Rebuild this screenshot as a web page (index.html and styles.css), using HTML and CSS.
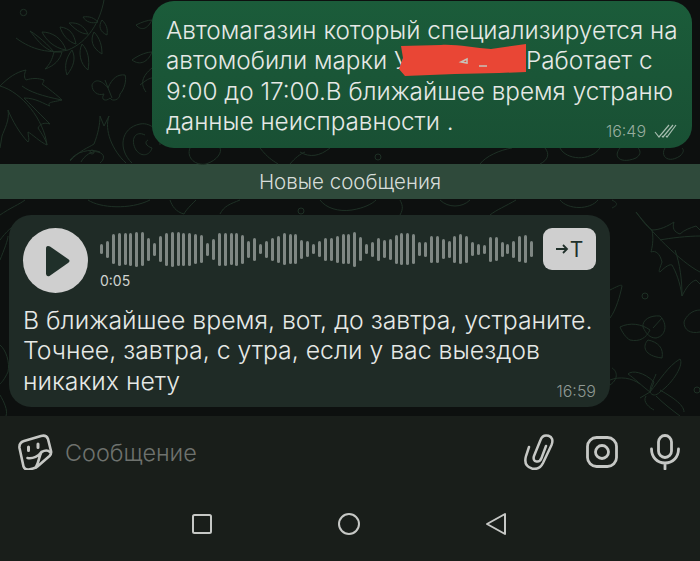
FILE: index.html
```html
<!DOCTYPE html>
<html>
<head>
	<meta charset="utf-8">
	<title>Чат</title>
	<link rel="stylesheet" href="styles.css">
</head>
<body>
	<div class="chat">
		<svg class="doodles" width="700" height="416" viewBox="0 0 700 416" fill="none">
			<!-- branch -->
			<path d="M104 0C100 22 88 42 68 50C50 54 32 50 16 38"/>
			<path d="M54 52C44 40 32 32 30 31C36 38 42 48 54 52ZM66 50C62 38 52 32 42 32C46 40 54 48 66 50ZM76 44C74 34 70 28 60 27C62 34 68 42 76 44ZM88 34C84 26 78 22 69 23C74 28 80 34 88 34ZM98 22C94 18 90 16 83 17C86 22 92 24 98 22Z"/>
			<path d="M54 52C52 60 50 64 45 69C54 66 60 60 62 52ZM72 50C66 58 64 66 67 75C74 66 76 58 72 50ZM82 44C78 52 80 64 88 70C90 60 88 50 82 44ZM94 32C90 40 92 48 102 54C102 46 100 38 94 32ZM102 20C98 26 100 32 107 35C108 28 106 24 102 20Z"/>
			<circle cx="23.500" cy="12.500" r="3.200"/>
			<!-- maple leaf -->
			<path d="M0 86C8 78 16 72 26 70C24 74 24 78 26 80C32 78 38 78 44 80C44 82 42 84 42 84C48 88 58 96 62 100C54 102 46 102 50 106C44 104 36 98 24 98C30 104 36 110 50 124C44 122 40 124 38 128C42 134 46 140 47 145C40 142 32 134 28 132C28 136 30 140 28 142C20 134 12 120 8 110C10 120 4 130 2 136L0 148"/>
			<path d="M0 86C22 92 44 120 47 145M22 86C30 92 42 96 62 100"/>
			<!-- butterfly -->
			<path d="M108 88C100 78 94 80 92 85C92 92 98 96 104 94C100 100 106 102 110 98C112 102 120 100 120 94C124 90 127 80 125 75C118 74 112 78 108 88ZM108 88L105 80M108 88L112 98"/>
			<!-- squirrel -->
			<path d="M70 161C80 150 88 148 94 144C98 134 100 124 100 116L104 126L109 116C104 130 112 150 126 163M81 162C84 156 92 150 98 152C106 154 104 160 100 163"/>
			<circle cx="92" cy="152" r="2"/>
			<path d="M132 163C118 150 120 128 140 124C152 122 160 132 160 145M145 135C135 130 130 140 136 150C142 158 150 155 152 148C146 146 144 142 148 140"/>
			<!-- leaves behind bubble -->
			<path d="M136 25C142 22 148 20 152 20C148 28 142 32 136 25ZM132 60C140 54 148 52 152 52C148 62 140 66 132 60ZM140 85C146 80 150 78 152 78M146 92C140 84 142 76 152 68"/>
			<!-- strip under the outgoing bubble -->
			<path d="M70 160C76 152 90 148 100 152M190 148C186 158 196 166 206 164C218 160 222 152 220 148M260 148C268 158 272 160 278 164M300 152C310 158 320 156 330 148M290 164C295 158 300 154 305 152"/>
			<circle cx="378" cy="157" r="3"/>
			<path d="M480 164C486 156 500 150 512 148M545 148C550 154 548 160 540 164M560 148C566 160 590 162 600 148M620 148C612 158 622 164 636 158C642 154 640 150 638 148M665 148C660 156 668 164 680 156C684 152 684 150 682 148"/>
			<!-- strip above the voice bubble -->
			<path d="M0 215C10 208 20 204 25 200M88 200C100 208 130 210 150 200M170 200C172 206 176 212 184 214M196 200C190 206 186 210 184 214M220 214C224 206 230 204 240 200M320 200C326 208 338 212 352 210C364 208 372 204 376 200M400 215C404 208 402 204 400 200M440 200C448 208 462 208 470 200M490 215C496 210 506 206 516 200M560 200C568 210 590 210 598 200M612 208C616 206 620 204 612 200"/>
			<circle cx="301" cy="211" r="3"/>
			<!-- maple leaf right -->
			<path d="M636 212C642 220 646 226 652 230C660 230 668 226 674 222C672 228 674 232 680 234C684 230 690 228 696 226L700 230M652 230C654 240 652 248 651 252C656 250 660 254 662 262C660 268 658 272 660 272C666 266 670 264 672 265C676 272 680 282 682 296C686 288 690 282 696 280L700 284"/>
			<path d="M636 212C650 230 680 262 700 272M660 240C670 238 688 236 700 236M675 250C680 264 682 280 682 296"/>
			<circle cx="645" cy="296" r="3"/>
			<!-- hazelnuts -->
			<path d="M620 327C630 322 642 324 650 330C646 338 640 342 630 340C626 338 622 332 620 327ZM643 327C642 320 650 315 660 316C668 324 666 336 656 338C650 338 646 334 643 327ZM648 340C642 346 644 356 662 358C664 348 658 342 648 340ZM653 328L662 318"/>
			<path d="M700 310C692 310 686 316 684 322C684 330 690 334 700 332"/>
			<!-- dragonfly -->
			<path d="M650 392C660 380 668 366 680 359C684 364 674 382 660 392C656 396 652 396 650 392ZM650 392C642 386 634 378 628 374C632 370 644 372 654 382ZM660 390C670 396 684 404 684 412M656 396C664 404 672 410 680 416M646 396C642 402 650 408 654 410M650 392C650 385 654 380 656 374M640 398L650 392M610 380C620 376 632 378 640 384"/>
			<circle cx="697" cy="390" r="3"/>
			<!-- left of the voice bubble -->
			<path d="M0 240C6 232 12 226 20 222M0 260C4 250 8 240 8 236M0 345C6 350 10 362 8 372C4 380 2 382 0 384M0 395C4 402 8 410 6 416"/>
			<!-- right of the voice bubble -->
			<path d="M610 290C618 286 622 284 622 286C620 296 616 310 610 318M610 385C620 378 616 370 612 368"/>
		</svg>

		<div class="bubble out">
			<p class="msg">Автомагазин который специализируется на<br>автомобили марки У<span class="redact"><svg width="132" height="32" viewBox="0 0 132 32"><path d="M6 2L46 1C60 0 80 4 96 5L131 0L131 28L104 29L60 30L10 32L4 25L8 14Z" fill="#e94635"/><path d="M66 18L72 15L72 19ZM84 22L92 22" stroke="#c7c2b8" stroke-width="1.500" fill="none"/></svg></span>Работает с<br>9:00 до 17:00.В ближайшее время устраню<br>данные неисправности .</p>
			<div class="meta">
				<span>16:49</span>
				<svg width="23" height="14" viewBox="0 0 23 14" fill="none"><path d="M1 8L5 13L15 1M8 12L9 13L19 1M12 12L13 13L22 1" stroke="#a6bcaf" stroke-width="1.200"/></svg>
			</div>
		</div>

		<div class="divider">Новые сообщения</div>

		<div class="bubble in">
			<div class="voice">
				<button class="play"><svg width="25" height="32" viewBox="0 0 25 32"><path d="M3 1C1.500 1 1 2 1 3.500L1 28.500C1 30.500 2.500 32 4.500 31L23 18C25 16.500 25 15.500 23 14L5 1.500C4.500 1.200 3.800 1 3 1Z" fill="#20302a"/></svg></button>
				<div class="track">
					<div class="wave"><i style="height:10px"></i><i style="height:17px"></i><i style="height:30px"></i><i style="height:33px"></i><i style="height:32px"></i><i style="height:33px"></i><i style="height:35px"></i><i style="height:34px"></i><i style="height:23px"></i><i style="height:13px"></i><i style="height:26px"></i><i style="height:33px"></i><i style="height:35px"></i><i style="height:34px"></i><i style="height:33px"></i><i style="height:33px"></i><i style="height:30px"></i><i style="height:28px"></i><i style="height:13px"></i><i style="height:21px"></i><i style="height:33px"></i><i style="height:33px"></i><i style="height:32px"></i><i style="height:33px"></i><i style="height:29px"></i><i style="height:17px"></i><i style="height:23px"></i><i style="height:10px"></i><i style="height:17px"></i><i style="height:23px"></i><i style="height:27px"></i><i style="height:32px"></i><i style="height:30px"></i><i style="height:30px"></i><i style="height:19px"></i><i style="height:16px"></i><i style="height:10px"></i><i style="height:16px"></i><i style="height:23px"></i><i style="height:23px"></i><i style="height:27px"></i><i style="height:30px"></i><i style="height:30px"></i><i style="height:35px"></i><i style="height:24px"></i><i style="height:10px"></i><i style="height:15px"></i><i style="height:23px"></i><i style="height:18px"></i><i style="height:21px"></i><i style="height:29px"></i><i style="height:32px"></i><i style="height:32px"></i><i style="height:30px"></i><i style="height:14px"></i><i style="height:15px"></i><i style="height:27px"></i><i style="height:27px"></i><i style="height:20px"></i><i style="height:17px"></i><i style="height:27px"></i><i style="height:30px"></i><i style="height:27px"></i><i style="height:14px"></i><i style="height:11px"></i><i style="height:9px"></i><i style="height:25px"></i><i style="height:24px"></i><i style="height:15px"></i><i style="height:10px"></i><i style="height:17px"></i><i style="height:26px"></i><i style="height:28px"></i><i style="height:16px"></i></div>
					<div class="length">0:05</div>
				</div>
				<button class="transcribe"><svg width="13" height="12" viewBox="0 0 13 12" fill="none"><path d="M0 6H11M7 2L11 6L7 10" stroke="#20302a" stroke-width="1.800"/></svg><span>T</span></button>
			</div>
			<p class="msg">В ближайшее время, вот, до завтра, устраните.<br>Точнее, завтра, с утра, если у вас выездов<br>никаких нету</p>
			<div class="meta"><span>16:59</span></div>
		</div>
	</div>

	<div class="bottom">
		<div class="composer">
			<svg class="sticker" width="36" height="36" viewBox="0 0 36 36" fill="none" stroke="#c6c8c5" stroke-width="2.600" stroke-linejoin="round" stroke-linecap="round">
				<path d="M7 7L24 2C28 1 30 2.500 31 5L34 17C34.500 19 34 20.500 32.500 22L21 32C19.500 33.500 18 34 16 34.500L12 35.500C9 36 7.500 35 6.500 32.500L2.500 14C2 10 4 8 7 7Z"/>
				<path d="M11.500 13V16.500M21 10V13.500" stroke-width="3"/>
				<path d="M10.500 24C16 25 22 22 24.500 18C28 16 31 16 33 18M24.500 18C22 22 22 28 19 33"/>
			</svg>
			<span class="placeholder">Сообщение</span>
			<div class="tools">
				<svg width="30" height="36" viewBox="0 0 30 36" fill="none" stroke="#c6c8c5" stroke-width="2.500" stroke-linecap="round"><path d="M5 13L2 22C0 29 3 33 8 34.500C14 36 17 33 19 29L27.500 11C29.500 6 28 3 24.500 1.800C21 .8 18 2 16.500 6L10 22C9 25 10 27 12.500 27.500C15 28 16.500 26.500 17.500 24L22 12"/></svg>
				<svg width="32" height="32" viewBox="0 0 32 32" fill="none" stroke="#c6c8c5" stroke-width="2.800"><rect x="1.500" y="1.500" width="29" height="29" rx="9"/><circle cx="16" cy="16" r="6.500"/></svg>
				<svg width="30" height="36" viewBox="0 0 30 36" fill="none" stroke="#c6c8c5" stroke-width="2.800" stroke-linecap="round"><rect x="8.500" y="1.500" width="13" height="22" rx="6.500"/><path d="M1.500 15C1.500 23 7 29 15 29C23 29 28.500 23 28.500 15M15 29V35"/></svg>
			</div>
		</div>
		<nav class="softkeys">
			<svg width="22" height="22" viewBox="0 0 22 22" fill="none" stroke="#c6c8c5" stroke-width="2"><rect x="2" y="2" width="18" height="18" rx="1.500"/></svg>
			<svg width="24" height="24" viewBox="0 0 24 24" fill="none" stroke="#c6c8c5" stroke-width="2"><circle cx="12" cy="12" r="10"/></svg>
			<svg width="22" height="24" viewBox="0 0 22 24" fill="none" stroke="#c6c8c5" stroke-width="2" stroke-linejoin="round"><path d="M20 2V22L2 12Z"/></svg>
		</nav>
	</div>
</body>
</html>
```

FILE: styles.css
```css
* {
	box-sizing: border-box;
}
html, body {
	margin: 0;
	height: 561px;
	overflow: hidden;
}
body {
	background: #191e1a;
	font-family: Inter, "Open Sans", sans-serif;
	font-weight: 300;
}
.chat {
	position: relative;
	height: 416px;
	padding-top: 1px;
	background: #0d100f;
	overflow: hidden;
}
.doodles {
	position: absolute;
	top: 0;
	left: 0;
}
.doodles path, .doodles circle {
	stroke: #1e3025;
	stroke-width: 1;
}
.bubble {
	position: relative;
	border-radius: 22px;
}
.msg {
	margin: 0;
	color: #e6e9e6;
	font-size: 24.300px;
	line-height: 30.400px;
	white-space: nowrap;
}
.meta {
	display: flex;
	justify-content: flex-end;
	align-items: center;
	gap: 8px;
	font-size: 16px;
}
.out {
	width: 540px;
	height: 147px;
	margin-left: 152px;
	padding: 14px 14px 0;
	background: linear-gradient(#1b5c3a, #195034);
}
.out .meta {
	margin-top: -16px;
	padding-right: 1px;
	color: #96ad9f;
}
.redact {
	display: inline-block;
	width: 117px;
	height: 20px;
	position: relative;
}
.redact svg {
	position: absolute;
	top: -5px;
	left: -14px;
}
.divider {
	height: 35px;
	margin-top: 16px;
	background: #2f4a3b;
	color: #d7ddd9;
	font-size: 20.500px;
	line-height: 35px;
	text-align: center;
}
.in {
	width: 601px;
	height: 192px;
	margin: 16px 0 0 9px;
	padding: 13px 14px 0;
	background: #1f2b26;
}
.in .msg {
	margin-top: 12px;
	padding-left: 0;
	font-size: 24.800px;
}
.in .meta {
	margin-top: -15px;
	color: #8e9994;
}
.voice {
	display: flex;
	align-items: flex-start;
}
.play {
	flex: none;
	display: flex;
	align-items: center;
	justify-content: center;
	width: 65px;
	height: 65px;
	padding: 0 0 0 3px;
	border: none;
	border-radius: 50%;
	background: #cfcfcf;
}
.track {
	width: 433px;
	margin-left: 12px;
	padding-top: 3px;
}
.wave {
	display: flex;
	align-items: center;
	gap: 2.900px;
	height: 36px;
}
.wave i {
	flex: none;
	width: 3px;
	border-radius: 2px;
	background: #7f8783;
}
.length {
	margin-top: 5px;
	color: #cfd3d0;
	font-size: 14px;
	font-weight: 400;
}
.transcribe {
	flex: none;
	display: flex;
	align-items: center;
	justify-content: center;
	gap: 1px;
	width: 53px;
	height: 42px;
	margin-left: 10px;
	padding: 0;
	border: none;
	border-radius: 9px;
	background: #cfcfcf;
	color: #20302a;
	font-family: Inter, sans-serif;
	font-size: 21px;
	font-weight: 400;
}
.bottom {
	height: 145px;
}
.composer {
	display: flex;
	align-items: center;
	height: 72px;
	padding: 0 20px 0 17px;
}
.sticker {
	flex: none;
}
.placeholder {
	margin-left: 12px;
	color: #6e726e;
	font-size: 23.400px;
}
.tools {
	display: flex;
	align-items: center;
	gap: 32px;
	margin-left: auto;
}
.softkeys {
	display: flex;
	align-items: center;
	justify-content: space-between;
	width: 316px;
	margin: 24px 0 0 191px;
}
```
